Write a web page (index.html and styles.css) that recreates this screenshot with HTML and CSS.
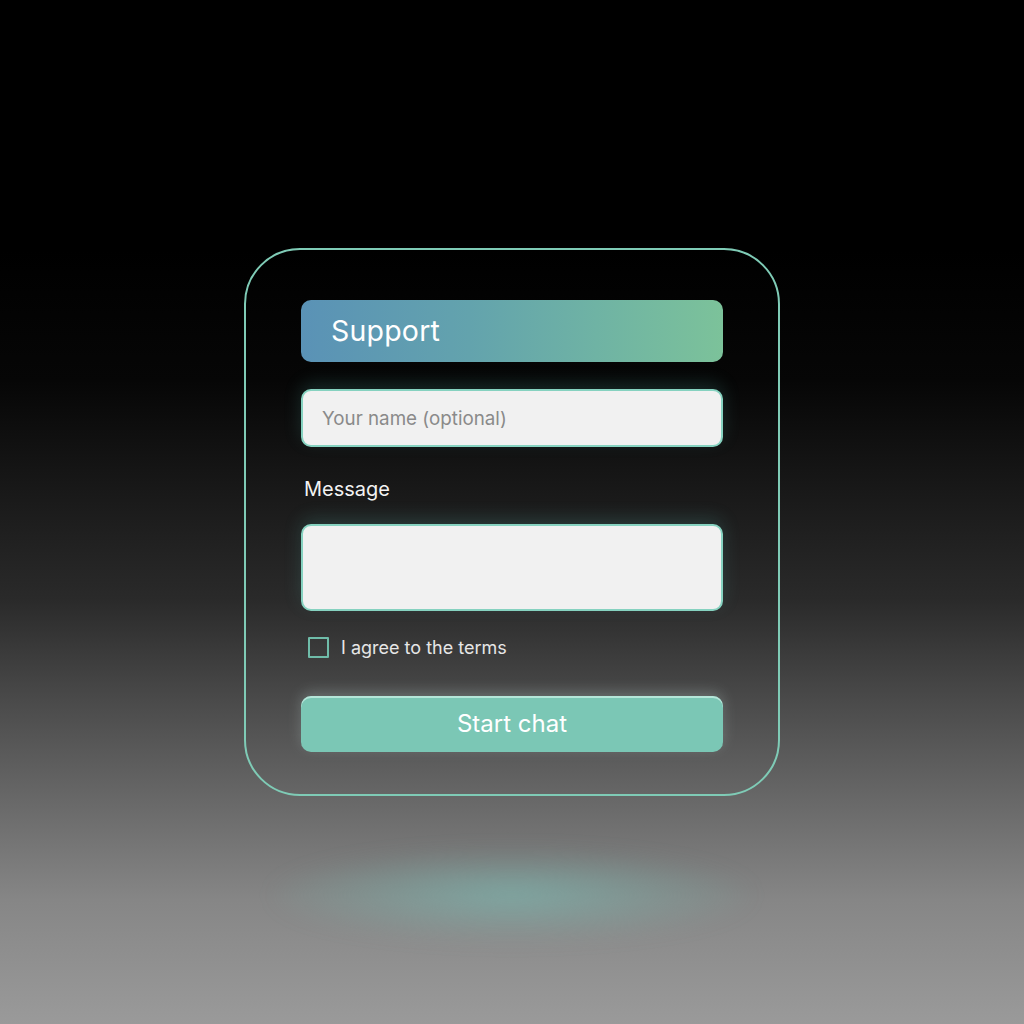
FILE: index.html
```html
<!DOCTYPE html>
<html>
<head>
<meta charset="utf-8">
<link rel="stylesheet" href="styles.css">
</head>
<body>
<div class="stage">
  <div class="card">
    <div class="header">Support</div>
    <div class="field name"><span class="placeholder">Your name (optional)</span></div>
    <div class="label">Message</div>
    <div class="field message"></div>
    <div class="check-row"><span class="box"></span><span class="check-text">I agree to the terms</span></div>
    <div class="button">Start chat</div>
  </div>
  <div class="glow"></div>
</div>
</body>
</html>
```
FILE: styles.css
```css
html, body {
  margin: 0;
  padding: 0;
  width: 1024px;
  height: 1024px;
  overflow: hidden;
}
body {
  font-family: Inter, "Noto Sans", sans-serif;
  background: linear-gradient(to bottom, #000 0px, #000 250px, #060606 380px, #1a1a1a 500px, #2a2a2a 600px, #4a4a4a 700px, #686868 800px, #868686 900px, #9a9a9a 1024px);
}
.stage {
  position: relative;
  width: 1024px;
  height: 1024px;
  display: flex;
  justify-content: center;
  padding-top: 248px;
  box-sizing: border-box;
}
.card {
  width: 536px;
  height: 548px;
  box-sizing: border-box;
  border: 2px solid #7fcbb6;
  border-radius: 56px;
  padding: 50px 55px 0 55px;
  display: flex;
  flex-direction: column;
  position: relative;
  z-index: 1;
}
.header {
  height: 62px;
  border-radius: 10px;
  background: linear-gradient(to right, #5a92b6 0%, #63a3ad 40%, #6fb3a4 70%, #7cc29a 100%);
  color: #fff;
  font-size: 28.5px;
  line-height: 62px;
  padding-left: 30px;
  letter-spacing: 0.2px;
}
.field {
  background: #f1f1f1;
  border: 2px solid #86d2c0;
  border-radius: 10px;
  box-sizing: border-box;
  box-shadow: 0 -6px 18px rgba(90, 190, 175, 0.18);
}
.name {
  margin-top: 27px;
  height: 58px;
  display: flex;
  align-items: center;
  padding-left: 19px;
}
.placeholder {
  color: #8a8a8a;
  font-size: 18.8px;
}
.label {
  margin-top: 29px;
  color: #f2f2f2;
  font-size: 20px;
  line-height: 26px;
  padding-left: 3px;
}
.message {
  margin-top: 22px;
  height: 87px;
}
.check-row {
  margin-top: 25px;
  display: flex;
  align-items: center;
  height: 22px;
  padding-left: 7px;
}
.box {
  width: 17px;
  height: 17px;
  border: 2px solid #6fbca9;
  border-radius: 1px;
  box-sizing: content-box;
}
.check-text {
  margin-left: 12px;
  color: #e6e6e6;
  font-size: 18px;
}
.button {
  margin-top: 38px;
  height: 56px;
  border-radius: 10px;
  background: #7bc7b5;
  color: #fff;
  font-size: 24px;
  line-height: 56px;
  text-align: center;
  box-shadow: inset 0 2px 0 rgba(220, 250, 242, 0.6), 0 -4px 14px rgba(220, 245, 240, 0.22);
}
.glow {
  position: absolute;
  left: 272px;
  top: 850px;
  width: 480px;
  height: 90px;
  border-radius: 50%;
  background: radial-gradient(ellipse at center, rgba(120, 200, 190, 0.5) 0%, rgba(120, 190, 180, 0.22) 45%, rgba(120, 180, 170, 0) 75%);
  filter: blur(10px);
}
```
